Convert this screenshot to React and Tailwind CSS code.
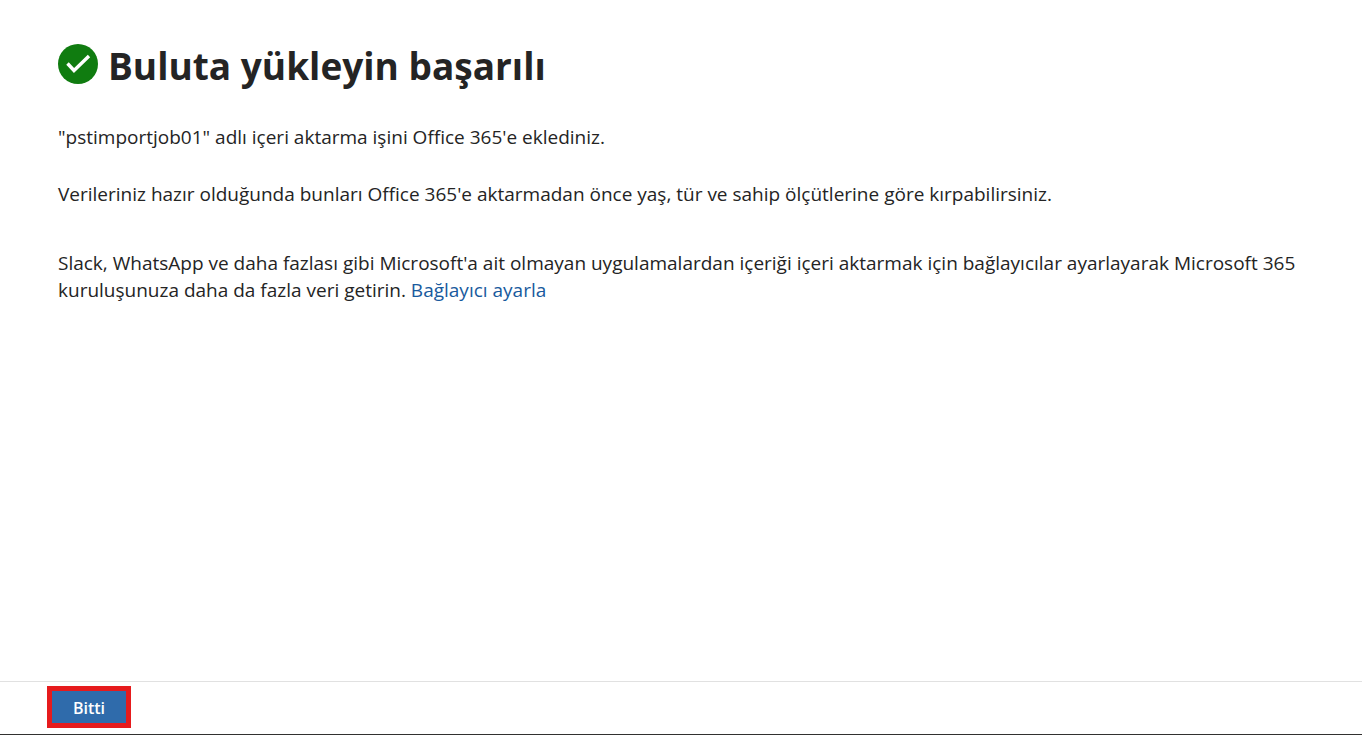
export default function App() {
  return (
    <div className="flex min-h-screen flex-col border-b border-[#323130] bg-white font-['Open_Sans','Noto_Sans',sans-serif] text-[#242424]">
      <main className="flex-1 pt-[38px] pr-[50px] pl-[58px]">
        <div className="flex items-center gap-[10px]">
          <svg className="size-10 shrink-0" viewBox="0 0 40 40" aria-hidden="true">
            <circle cx="20" cy="20" r="20" fill="#107c10" />
            <path d="M9.5 19.5l6.5 7L31 12" fill="none" stroke="#fff" strokeWidth="3.4" />
          </svg>
          <h1 className="pt-1 text-[37px] leading-[48px] font-bold">Buluta yükleyin başarılı</h1>
        </div>

        <div className="mt-[34px] text-[19px] leading-[27px]">
          <p>"pstimportjob01" adlı içeri aktarma işini Office 365'e eklediniz.</p>
          <p className="mt-[30px]">
            Verileriniz hazır olduğunda bunları Office 365'e aktarmadan önce yaş, tür ve sahip ölçütlerine göre kırpabilirsiniz.
          </p>
          <p className="mt-[42px]">
            Slack, WhatsApp ve daha fazlası gibi Microsoft'a ait olmayan uygulamalardan içeriği içeri aktarmak için bağlayıcılar ayarlayarak Microsoft 365 kuruluşunuza daha da fazla veri getirin.{' '}
            <a className="text-[#185a9d]" href="#baglayici">
              Bağlayıcı ayarla
            </a>
          </p>
        </div>
      </main>

      <footer className="flex border-t border-[#e1e1e1] px-[47px] pt-1 pb-[6px]">
        <button className="h-[42px] w-[84px] border-5 border-[#e61b1d] bg-[#2f6bab] pt-px text-base font-semibold text-white" type="button">
          Bitti
        </button>
      </footer>
    </div>
  );
}
